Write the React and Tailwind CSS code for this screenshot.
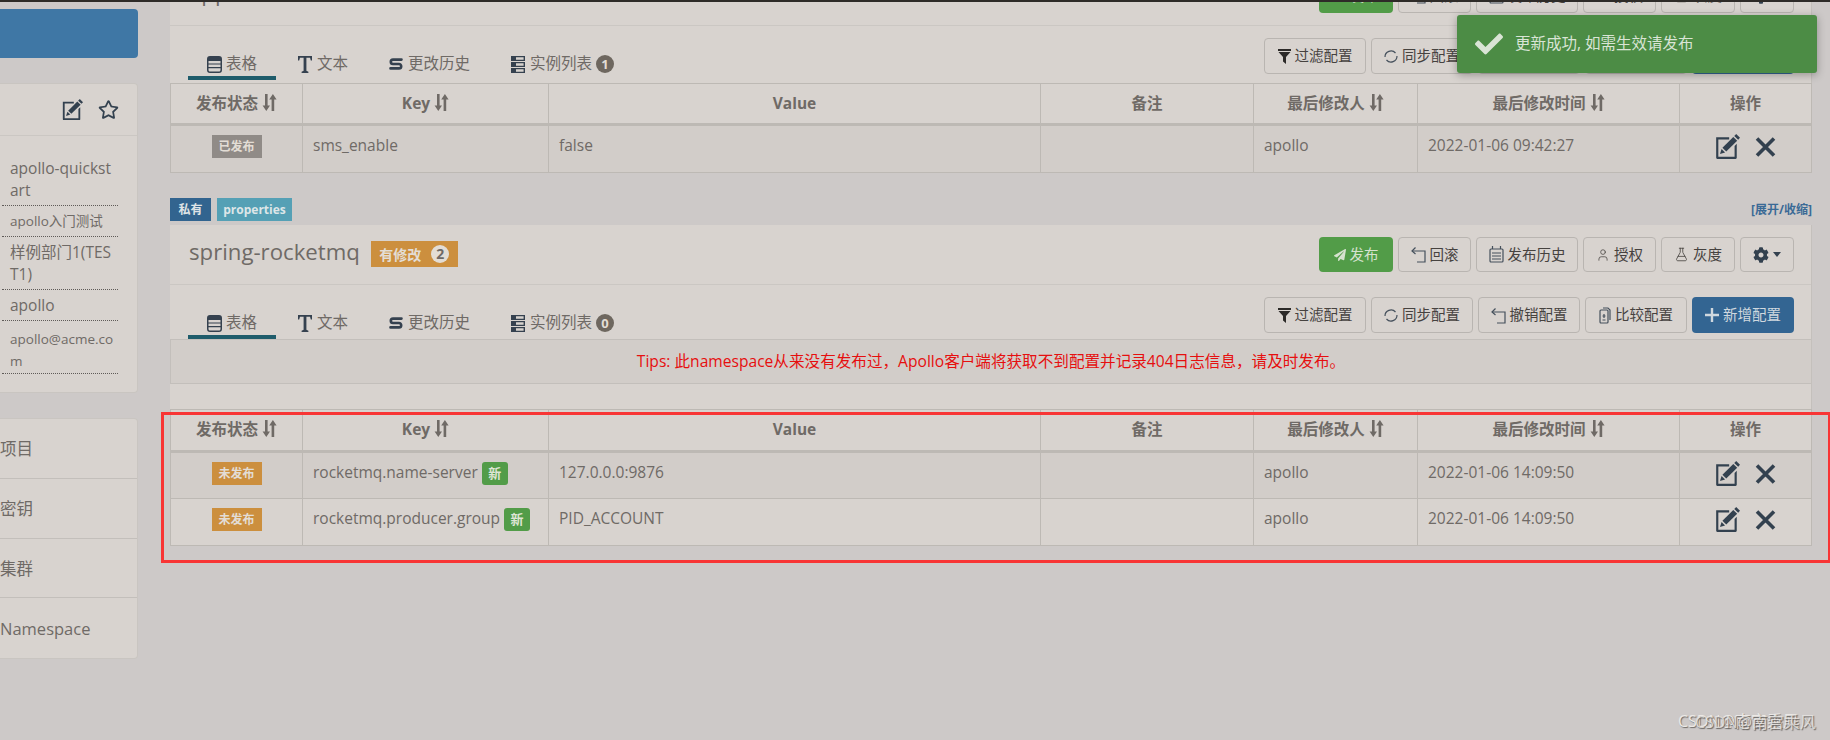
import { FaCheck, FaCog, FaPaperPlane, FaRegStar } from "react-icons/fa";
import { FlaskConical, User } from "lucide-react";

const FONT = "font-['Open_Sans','Noto_Sans_CJK_SC',sans-serif]";

function SortIcon() {
  return (
    <svg width="15" height="17" viewBox="0 0 15 17" className="inline-block ml-1 align-[-2px]" fill="currentColor">
      <path d="M3 0h2.600v11.500H8L4.300 17 .6 11.500H3z" />
      <path d="M9.600 17h2.600V5.500h2.400L10.900 0 7.200 5.500h2.400z" />
    </svg>
  );
}

function EditIcon({ size = 26 }) {
  return (
    <svg width={size} height={size} viewBox="0 0 24 24" fill="#33414f" className="shrink-0">
      <path d="M2 3h12v2H4v16h15V11l2-2v13a1 1 0 0 1-1 1H3a1 1 0 0 1-1-1z" />
      <path d="M20.500 0 24 3.500 22.300 5.300 18.700 1.800z" />
      <path d="M17.800 2.700 21.400 6.200 11.300 16.200 7.800 12.700z" />
      <path d="M7 13.800 10.200 17 5.500 18.500z" />
    </svg>
  );
}

function CrossIcon() {
  return (
    <svg width="21" height="20" viewBox="0 0 21 20" fill="none" stroke="#33414f" strokeWidth="3.600" className="shrink-0">
      <path d="M2 1.500 19 18.500M19 1.500 2 18.500" />
    </svg>
  );
}

function TableIcon() {
  return (
    <svg width="15" height="17" viewBox="0 0 15 17" fill="#35414f">
      <path d="M3 0h9a3 3 0 0 1 3 3v11a3 3 0 0 1-3 3H3a3 3 0 0 1-3-3V3a3 3 0 0 1 3-3zM1.500 5v2.400h12V5zm0 3.600V11h12V8.600zm0 3.600v1.800c0 .9.600 1.500 1.500 1.500h9c.9 0 1.500-.6 1.500-1.500v-1.800z" />
    </svg>
  );
}

function TextIcon() {
  return (
    <svg width="14" height="17" viewBox="0 0 14 17" fill="#35414f">
      <path d="M0 0h14v4.500h-1.200L12 1.800H8.400v13l2 1V17H3.600v-1.200l2-1v-13H2L1.200 4.500H0z" />
    </svg>
  );
}

function HistoryIcon() {
  return (
    <svg width="14" height="12" viewBox="0 0 14 12" fill="none" stroke="#35414f" strokeWidth="2.600" strokeLinecap="round">
      <path d="M12.500 1.600H4a2.200 2.200 0 0 0 0 4.400h6a2.200 2.200 0 0 1 0 4.400H1.500" />
    </svg>
  );
}

function ServerIcon() {
  return (
    <svg width="14" height="17" viewBox="0 0 14 17" fill="#35414f">
      <path d="M0 0h14v5H0zM0 6h14v5H0zM0 12h14v5H0z" />
      <path d="M5 1.200h7.600v2.600H5zM5 7.200h7.600v2.600H5zM5 13.200h7.600v2.600H5z" fill="#d8d3cf" />
    </svg>
  );
}

function BackIcon() {
  return (
    <svg width="15" height="17" viewBox="0 0 15 17" fill="none" stroke="#45505c" strokeWidth="1.200">
      <path d="M1 5h13v11H6" />
      <path d="M4.500 1.500 1 5l3.500 3" />
    </svg>
  );
}

function HistoryBtnIcon() {
  return (
    <svg width="15" height="17" viewBox="0 0 15 17" fill="none" stroke="#45505c" strokeWidth="1.200">
      <rect x="1" y="3" width="13" height="13" rx="1" />
      <path d="M3.500 0v3M11.500 0v3M3 7h9M3 10h9M3 13h9" />
    </svg>
  );
}

function SyncIcon() {
  return (
    <svg width="14" height="15" viewBox="0 0 14 15" fill="none" stroke="#45505c" strokeWidth="1.200">
      <path d="M1 8a6 6 0 0 1 10.500-4M13 7a6 6 0 0 1-10.500 4" />
    </svg>
  );
}

function CompareIcon() {
  return (
    <svg width="12" height="17" viewBox="0 0 12 17" fill="none" stroke="#45505c" strokeWidth="1.200">
      <rect x="1" y="3" width="8" height="13" rx="1" />
      <path d="M4 1h5l2 2v10" />
      <path d="M5 7v4M3.500 9h3M3.500 13h3" />
    </svg>
  );
}

function FunnelIcon() {
  return (
    <svg width="13" height="15" viewBox="0 0 13 15" fill="#2c2a28">
      <path d="M0 0h13v2H0zM.5 3h12L8 8v7L5 12.500V8z" />
    </svg>
  );
}

function PlusIcon() {
  return (
    <svg width="14" height="14" viewBox="0 0 14 14" fill="#cfd8df">
      <path d="M5.800 0h2.400v5.800H14v2.400H8.200V14H5.800V8.200H0V5.800h5.800z" />
    </svg>
  );
}

function Button({ width, icon, children }) {
  return (
    <button className={`${width} h-full flex items-center justify-center gap-1 rounded border border-[#b9b5b1] text-[14.5px] text-[#46423f]`}>
      {icon}
      {children}
    </button>
  );
}

function SideRow({ children, className }) {
  return <div className={`ml-[2px] mr-[19px] pl-2 border-b border-dotted border-[#5f5b58] ${className}`}>{children}</div>;
}

const COLS = ["w-[132px]", "w-[246px]", "w-[492px]", "w-[213px]", "w-[164px]", "w-[262px]", "w-[132px]"];
const HEADS = [
  ["发布状态", true],
  ["Key", true],
  ["Value", false],
  ["备注", false],
  ["最后修改人", true],
  ["最后修改时间", true],
  ["操作", false],
];

function DataTable({ rows, headH, rowH }) {
  return (
    <table className="table-fixed w-[1641px] border-collapse text-[15.5px] text-[#6f6a66]">
      <colgroup>
        {COLS.map((c, i) => (
          <col key={i} className={c} />
        ))}
      </colgroup>
      <thead>
        <tr className={headH}>
          {HEADS.map(([label, sort]) => (
            <th key={label} className="border border-b-[3px] border-[#bdb9b4] text-center text-[15.5px] font-bold align-middle">
              {label}
              {sort && <SortIcon />}
            </th>
          ))}
        </tr>
      </thead>
      <tbody>
        {rows.map((r, i) => (
          <tr key={r.k} className={`${rowH} ${i % 2 === 0 ? "bg-[#d2cdc9]" : ""}`}>
            <td className="border border-[#bdb9b4] text-center align-top pt-[9px]">
              <span className={`block mx-auto w-[50px] h-[23px] leading-[23px] text-[12px] font-bold text-[#e3ddd5] ${r.published ? "bg-[#908b87]" : "bg-[#cc8f3e]"}`}>
                {r.published ? "已发布" : "未发布"}
              </span>
            </td>
            <td className="border border-[#bdb9b4] px-[10px] align-top pt-[9px]">
              <div className="flex items-start gap-[4px] h-[23px]">
                <span className="leading-[20px]">{r.k}</span>
                {!r.published && (
                  <span className="inline-block w-[26px] h-[23px] leading-[23px] rounded-[3px] text-center text-[13px] font-bold text-[#dfe5d5] bg-[#529c48]">新</span>
                )}
              </div>
            </td>
            <td className="border border-[#bdb9b4] px-[10px] align-top pt-[8px]">{r.v}</td>
            <td className="border border-[#bdb9b4]"></td>
            <td className="border border-[#bdb9b4] px-[10px] align-top pt-[8px]">apollo</td>
            <td className="border border-[#bdb9b4] px-[10px] align-top pt-[8px]">{r.t}</td>
            <td className="border border-[#bdb9b4] align-top pt-[8px]">
              <div className="flex items-center pl-[34px] gap-[15px]">
                <EditIcon />
                <CrossIcon />
              </div>
            </td>
          </tr>
        ))}
      </tbody>
    </table>
  );
}

function Panel({ title, badge, count, tips, rows, headH, rowH, className }) {
  return (
    <div className={`bg-[#d8d3cf] border-r border-[#c4c0bc] ${className}`}>
      <div className="h-[60px] flex items-center justify-between border-b border-[#cbc7c3] pl-[19px] pr-[17px]">
        <div className="flex items-center gap-[11px]">
          <span className="text-[22.2px] text-[#6f6a66] pb-[6px]">{title}</span>
          {badge && (
            <span className="w-[87px] h-[26px] flex items-center justify-center gap-[10px] bg-[#cc8f3e] text-[14px] font-bold text-[#e3ddd5]">
              有修改
              <span className="w-[18px] h-[18px] rounded-full bg-[#e3ddd5] text-[#6f6a66] text-center leading-[18px]">{badge}</span>
            </span>
          )}
        </div>
        <div className="flex h-[35px] gap-[5px]">
          <button className="w-[74px] h-full flex items-center justify-center gap-1 rounded bg-[#529c48] text-[14.5px] text-[#d6e2cf]">
            <FaPaperPlane size={12} />
            发布
          </button>
          <Button width="w-[73px]" icon={<BackIcon />}>回滚</Button>
          <Button width="w-[102px]" icon={<HistoryBtnIcon />}>发布历史</Button>
          <Button width="w-[73px]" icon={<User size={14} strokeWidth={1.3} />}>授权</Button>
          <Button width="w-[74px]" icon={<FlaskConical size={15} strokeWidth={1.3} />}>灰度</Button>
          <button className="w-[54px] h-full flex items-center justify-center gap-1 rounded border border-[#b9b5b1] text-[#33414f]">
            <FaCog size={16} />
            <span className="w-0 h-0 border-x-[4px] border-x-transparent border-t-[5px] border-t-[#33414f]"></span>
          </button>
        </div>
      </div>
      <div className="h-[54px] flex items-end justify-between pr-[17px]">
        <div className="flex ml-[18px] gap-[3px]">
          <div className="h-[42px] pt-[14px] flex items-center gap-1 px-[19px] border-b-4 border-[#1f5c6b] text-[15.5px] text-[#6f6a66]">
            <TableIcon />
            表格
          </div>
          <div className="h-[42px] pt-[14px] flex items-center gap-[5px] px-[19px] border-b-4 border-transparent text-[15.5px] text-[#6f6a66]">
            <TextIcon />
            文本
          </div>
          <div className="h-[42px] pt-[14px] flex items-center gap-[5px] px-[19px] border-b-4 border-transparent text-[15.5px] text-[#6f6a66]">
            <HistoryIcon />
            更改历史
          </div>
          <div className="h-[42px] pt-[14px] flex items-center gap-[5px] px-[19px] border-b-4 border-transparent text-[15.5px] text-[#6f6a66]">
            <ServerIcon />
            <span className="mr-[-1px]">实例列表</span>
            <span className="w-[18px] h-[18px] rounded-full bg-[#6e675f] text-[#e3ddd5] text-[13px] font-bold leading-[18px] text-center">{count}</span>
          </div>
        </div>
        <div className="flex h-[36px] gap-[5px] mb-[6px]">
          <Button width="w-[102px]" icon={<FunnelIcon />}>过滤配置</Button>
          <Button width="w-[102px]" icon={<SyncIcon />}>同步配置</Button>
          <Button width="w-[102px]" icon={<BackIcon />}>撤销配置</Button>
          <Button width="w-[102px]" icon={<CompareIcon />}>比较配置</Button>
          <button className="w-[102px] h-full flex items-center justify-center gap-1 rounded bg-[#336592] text-[14.5px] text-[#cfd8df]">
            <PlusIcon />
            新增配置
          </button>
        </div>
      </div>
      {tips && (
        <div className="h-[45px] flex items-center justify-center bg-[#d2cdc9] border-y border-l border-[#c3bfbb] text-[15.6px] text-[#e60f0f]">{tips}</div>
      )}
      {tips ? <div className="h-[25px]"></div> : <div className="h-[3px]"></div>}
      <DataTable rows={rows} headH={headH} rowH={rowH} />
    </div>
  );
}

export default function App() {
  return (
    <div className={`${FONT} relative w-[1830px] h-[740px] overflow-hidden bg-[#cdc9c8]`}>
      <div className="relative z-10 h-[2px] bg-[#2e2b28]"></div>
      <div className="flex">
        <div className="w-[138px] shrink-0 pt-[7px] flex flex-col gap-[25px] text-[#6f6a66]">
          <div className="h-[49px] rounded-r bg-[#3f77a5]"></div>
          <div className="h-[310px] bg-[#d8d3cf] rounded-r border-r border-y border-[#c9c5c1]">
            <div className="h-[52px] flex items-center justify-end gap-[15px] pr-[18px] border-b border-[#cbc7c3]">
              <EditIcon size={22} />
              <FaRegStar size={21} className="text-[#33414f]" />
            </div>
            <div className="pt-[21px]">
              <SideRow className="text-[15.5px] leading-[22px] pb-[4px]">apollo-quickst<br />art</SideRow>
              <SideRow className="text-[13.5px] leading-[30px]">apollo入门测试</SideRow>
              <SideRow className="text-[15.5px] leading-[22px] py-[4px]">样例部门1(TES<br />T1)</SideRow>
              <SideRow className="text-[15.5px] leading-[30px]">apollo</SideRow>
              <SideRow className="text-[13.5px] leading-[22px] pt-[7px] pb-[1px]">apollo@acme.co<br />m</SideRow>
            </div>
          </div>
          <div className="h-[241px] bg-[#d8d3cf] rounded-r border-r border-y border-[#c9c5c1] text-[16.5px] flex flex-col">
            <div className="h-[60px] flex items-center pt-[2px] border-b border-[#c3bfbb]">项目</div>
            <div className="h-[60px] flex items-center pt-[2px] border-b border-[#c3bfbb]">密钥</div>
            <div className="h-[60px] flex items-center pt-[2px] border-b border-[#c3bfbb]">集群</div>
            <div className="h-[60px] flex items-center pt-[2px]">Namespace</div>
          </div>
        </div>
        <div className="w-[1642px] ml-[32px] flex flex-col">
          <Panel
            className="-mt-[36px]"
            title="application"
            count="1"
            headH="h-[41px]"
            rowH="h-[48px]"
            rows={[{ k: "sms_enable", v: "false", t: "2022-01-06 09:42:27", published: true }]}
          />
          <div className="mt-[25px] h-[23px] flex items-center gap-[6px]">
            <span className="w-[41px] h-full leading-[23px] text-center bg-[#32648f] text-[12px] font-bold text-[#dfe3e6]">私有</span>
            <span className="w-[75px] h-full leading-[23px] text-center bg-[#55a0b5] text-[12px] font-bold text-[#dde6e8]">properties</span>
            <span className="ml-auto text-[12px] font-bold text-[#3a6a96]">[展开/收缩]</span>
          </div>
          <div className="h-[4px]"></div>
          <Panel
            title="spring-rocketmq"
            badge="2"
            count="0"
            headH="h-[42px]"
            rowH="h-[47px]"
            tips="Tips: 此namespace从来没有发布过，Apollo客户端将获取不到配置并记录404日志信息，请及时发布。"
            rows={[
              { k: "rocketmq.name-server", v: "127.0.0.0:9876", t: "2022-01-06 14:09:50" },
              { k: "rocketmq.producer.group", v: "PID_ACCOUNT", t: "2022-01-06 14:09:50" },
            ]}
          />
        </div>
      </div>

      {/* success toast */}
      <div className="absolute left-[1457px] top-[15px] w-[360px] h-[58px] flex items-center gap-[12px] pl-[18px] rounded-[3px] bg-[#4c8c45] shadow-[0_2px_8px_rgba(0,0,0,0.3)] text-[15.5px] text-[#d9e4d5]">
        <FaCheck size={28} />
        更新成功, 如需生效请发布
      </div>

      {/* red annotation box */}
      <div className="absolute left-[161px] top-[412px] w-[1669px] h-[151px] border-[3px] border-r-[2px] border-[#f83535]"></div>

      {/* watermark, stamped twice */}
      <div className="absolute left-[1678px] top-[709px] text-[16px] text-[#ece9e6] whitespace-nowrap [text-shadow:1px_1px_1px_#6b6764]">CSDN@南宫乘风</div>
      <div className="absolute left-[1695px] top-[710px] text-[16px] text-[#ece9e6]/80 whitespace-nowrap [text-shadow:1px_1px_1px_#6b6764]">CSDN@南宫乘风</div>
    </div>
  );
}
